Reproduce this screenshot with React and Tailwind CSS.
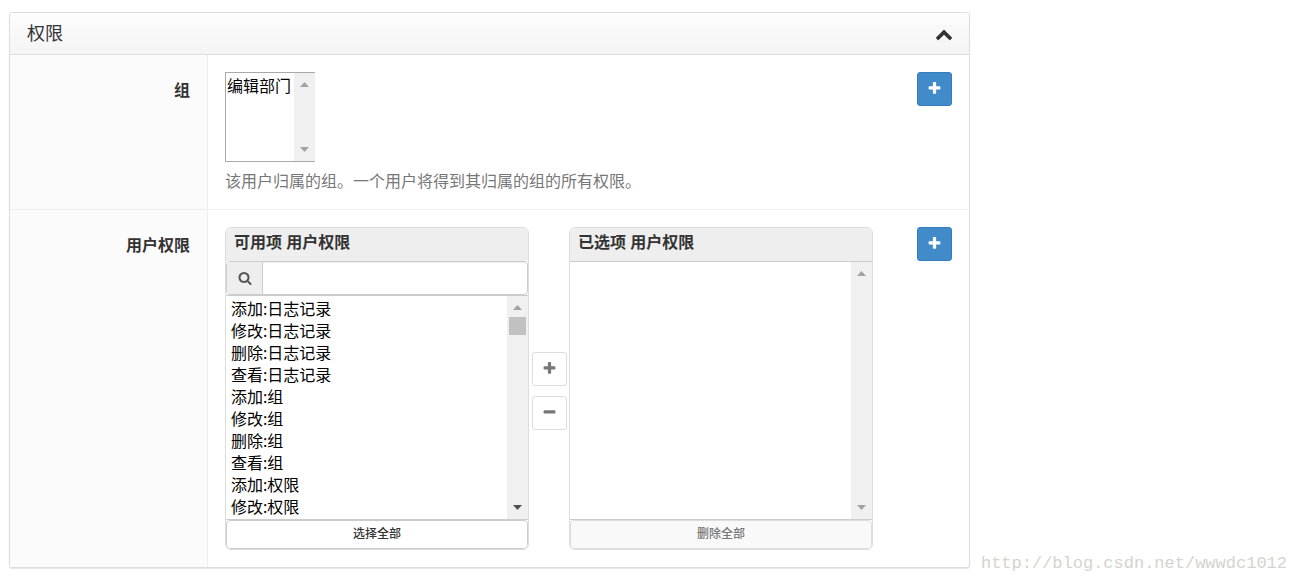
/**
 * User permissions form: group picker and the
 * available / chosen permission selector.
 */

import { useState } from 'react';

const ICONS = {
  plus: 'M1600 736v192q0 40-28 68t-68 28h-416v416q0 40-28 68t-68 28h-192q-40 0-68-28t-28-68v-416h-416q-40 0-68-28t-28-68v-192q0-40 28-68t68-28h416v-416q0-40 28-68t68-28h192q40 0 68 28t28 68v416h416q40 0 68 28t28 68z',
  minus: 'M1600 736v192q0 40-28 68t-68 28h-1216q-40 0-68-28t-28-68v-192q0-40 28-68t68-28h1216q40 0 68 28t28 68z',
  search: 'M1216 832q0-185-131.5-316.5t-316.5-131.5-316.5 131.5-131.5 316.5 131.5 316.5 316.5 131.5 316.5-131.5 131.5-316.5zm512 832q0 52-38 90t-90 38q-54 0-90-38l-343-342q-179 124-399 124-143 0-273.5-55.5t-225-150-150-225-55.5-273.5 55.5-273.5 150-225 225-150 273.5-55.5 273.5 55.5 225 150 150 225 55.5 273.5q0 220-124 399l343 343q37 37 37 90z',
  chevronUp: 'M1683 1331l-166 165q-19 19-45 19t-45-19l-531-531-531 531q-19 19-45 19t-45-19l-166-165q-19-19-19-45.5t19-45.5l742-741q19-19 45-19t45 19l742 741q19 19 19 45.5t-19 45.5z',
};

const permissions = [
  '添加:日志记录',
  '修改:日志记录',
  '删除:日志记录',
  '查看:日志记录',
  '添加:组',
  '修改:组',
  '删除:组',
  '查看:组',
  '添加:权限',
  '修改:权限',
];

const Icon = ({ name, className }) => (
  <svg viewBox="0 0 1792 1792" fill="currentColor" className={className} aria-hidden="true">
    <path d={ICONS[name]} />
  </svg>
);

/**
 * Scroll track shown beside a list box
 */
const ScrollTrack = ({ thumb = false }) => (
  <div
    aria-hidden="true"
    className="w-[21px] shrink-0 bg-[#f0f0f0] flex flex-col items-center py-[9px]"
  >
    <svg viewBox="0 0 9 5" className="w-[9px] h-[5px] fill-[#a3a3a3]">
      <path d="M0 5L4.5 0L9 5z" />
    </svg>
    {thumb && <div className="w-[17px] h-[18px] mt-[7px] bg-[#c1c1c1]" />}
    <svg
      viewBox="0 0 9 5"
      className={`w-[9px] h-[5px] mt-auto ${thumb ? 'fill-[#505050]' : 'fill-[#a3a3a3]'}`}
    >
      <path d="M0 0L4.5 5L9 0z" />
    </svg>
  </div>
);

const AddButton = ({ label }) => (
  <button
    type="button"
    aria-label={label}
    className="w-[35px] h-[34px] shrink-0 flex items-center justify-center rounded-[3px] border border-[#357ebd] bg-[#428bca] pb-px text-white"
  >
    <Icon name="plus" className="w-[15px] h-[15px]" />
  </button>
);

const MoveButton = ({ icon, label }) => (
  <button
    type="button"
    aria-label={label}
    className="w-[35px] h-[34px] flex items-center justify-center rounded-[3px] border border-[#ddd] bg-white pb-px text-[#777]"
  >
    <Icon name={icon} className="w-[15px] h-[15px]" />
  </button>
);

/**
 * One row of the form, with its label in the left column
 */
const FormRow = ({ label, htmlFor, addLabel, className = '', children }) => (
  <div className={`flex ${className}`}>
    <div className="w-[198px] shrink-0 border-r border-[#eee] bg-[#fbfbfb] pt-[23px] pr-[17px] text-right">
      <label htmlFor={htmlFor} className="font-bold leading-[22px]">{label}</label>
    </div>
    <div className="flex-1 min-w-0 flex items-start justify-between p-[17px]">
      {children}
      <AddButton label={addLabel} />
    </div>
  </div>
);

const App = () => {
  const [open, setOpen] = useState(true);
  const [query, setQuery] = useState('');

  const visible = permissions.filter((item) => item.includes(query));

  return (
    <div className="flex items-end bg-white pt-3 pb-3 pl-[9px] pr-[5px] font-['Noto_Sans','Noto_Sans_CJK_SC',sans-serif] text-base text-[#333]">
      <section className="flex-1 min-w-0 rounded-[3px] border border-[#ddd] bg-white shadow-[0_1px_1px_rgba(0,0,0,0.1)]">
        {/* Panel header */}
        <header className="h-[42px] flex items-center justify-between rounded-t-[2px] border-b border-[#ddd] bg-linear-to-b from-[#fdfdfd] to-[#f4f4f4] pl-[17px] pr-4">
          <h2 className="pb-[2px] text-lg leading-6">权限</h2>
          <button type="button" aria-label="折叠" onClick={() => setOpen(!open)}>
            <Icon name="chevronUp" className="w-[18px] h-[18px]" />
          </button>
        </header>

        {open && (
          <>
            {/* Groups */}
            <FormRow label="组" htmlFor="groups" addLabel="添加组" className="border-b border-[#eee]">
              <div>
                <div className="w-[90px] h-[90px] flex border border-r-0 border-[#a9a9a9]">
                  <select
                    id="groups"
                    multiple
                    className="flex-1 min-w-0 appearance-none overflow-hidden bg-white text-black outline-none"
                  >
                    <option className="h-[22px] p-0 pl-px leading-[20px]">编辑部门</option>
                  </select>
                  <ScrollTrack />
                </div>
                <p className="mt-2 leading-[22px] text-[#777]">
                  该用户归属的组。一个用户将得到其归属的组的所有权限。
                </p>
              </div>
            </FormRow>

            {/* User permissions */}
            <FormRow label="用户权限" htmlFor="available" addLabel="添加用户权限">
              <div className="flex flex-1 min-w-0">
                {/* Available */}
                <div className="flex-1 max-w-[304px] h-[323px] flex flex-col overflow-hidden rounded-md border border-[#ddd]">
                  <h3 className="h-[33px] shrink-0 bg-[#eee] px-2 pt-[3px] font-bold leading-[22px]">
                    可用项 用户权限
                  </h3>
                  <div className="h-[34px] shrink-0 flex rounded-[4px] border border-[#ccc] bg-white overflow-hidden">
                    <label
                      htmlFor="filter"
                      aria-label="搜索"
                      className="w-9 shrink-0 flex items-center justify-center border-r border-[#ccc] bg-[#eee] pb-px text-[#555]"
                    >
                      <Icon name="search" className="w-[14px] h-[14px]" />
                    </label>
                    <input
                      id="filter"
                      type="text"
                      value={query}
                      onChange={(e) => setQuery(e.target.value)}
                      className="flex-1 min-w-0 px-2 shadow-[inset_0_1px_1px_rgba(0,0,0,0.075)] outline-none"
                    />
                  </div>
                  <div className="flex-1 min-h-0 flex border-y border-[#ccc]">
                    <select
                      id="available"
                      multiple
                      className="flex-1 min-w-0 appearance-none overflow-hidden bg-white text-black outline-none"
                    >
                      {visible.map((item) => (
                        <option key={item} className="h-[22px] p-0 pl-[5px] leading-[20px]">
                          {item}
                        </option>
                      ))}
                    </select>
                    <ScrollTrack thumb />
                  </div>
                  <button
                    type="button"
                    className="h-[29px] shrink-0 rounded-[4px] border border-[#ccc] bg-white pb-px text-xs font-medium"
                  >
                    选择全部
                  </button>
                </div>

                {/* Move between the lists */}
                <div className="w-10 shrink-0 flex flex-col items-center justify-center gap-[10px] pt-1">
                  <MoveButton icon="plus" label="选择" />
                  <MoveButton icon="minus" label="删除" />
                </div>

                {/* Chosen */}
                <div className="flex-1 max-w-[304px] h-[323px] flex flex-col overflow-hidden rounded-md border border-[#ddd]">
                  <h3 className="h-[33px] shrink-0 bg-[#eee] px-2 pt-[3px] font-bold leading-[22px]">
                    <label htmlFor="chosen">已选项 用户权限</label>
                  </h3>
                  <div className="flex-1 min-h-0 flex border-y border-[#ccc]">
                    <select
                      id="chosen"
                      multiple
                      className="flex-1 min-w-0 appearance-none overflow-hidden bg-white outline-none"
                    />
                    <ScrollTrack />
                  </div>
                  <button
                    type="button"
                    className="h-[29px] shrink-0 rounded-[4px] border border-[#ddd] bg-[#f9f9f9] pb-px text-xs font-medium text-[#777]"
                  >
                    删除全部
                  </button>
                </div>
              </div>
            </FormRow>
          </>
        )}
      </section>

      <p className="ml-[11px] -mb-2 shrink-0 font-['Liberation_Mono',monospace] text-[17px] leading-6 text-[#d4d4cc]">
        http://blog.csdn.net/wwwdc1012
      </p>
    </div>
  );
};

export default App;
